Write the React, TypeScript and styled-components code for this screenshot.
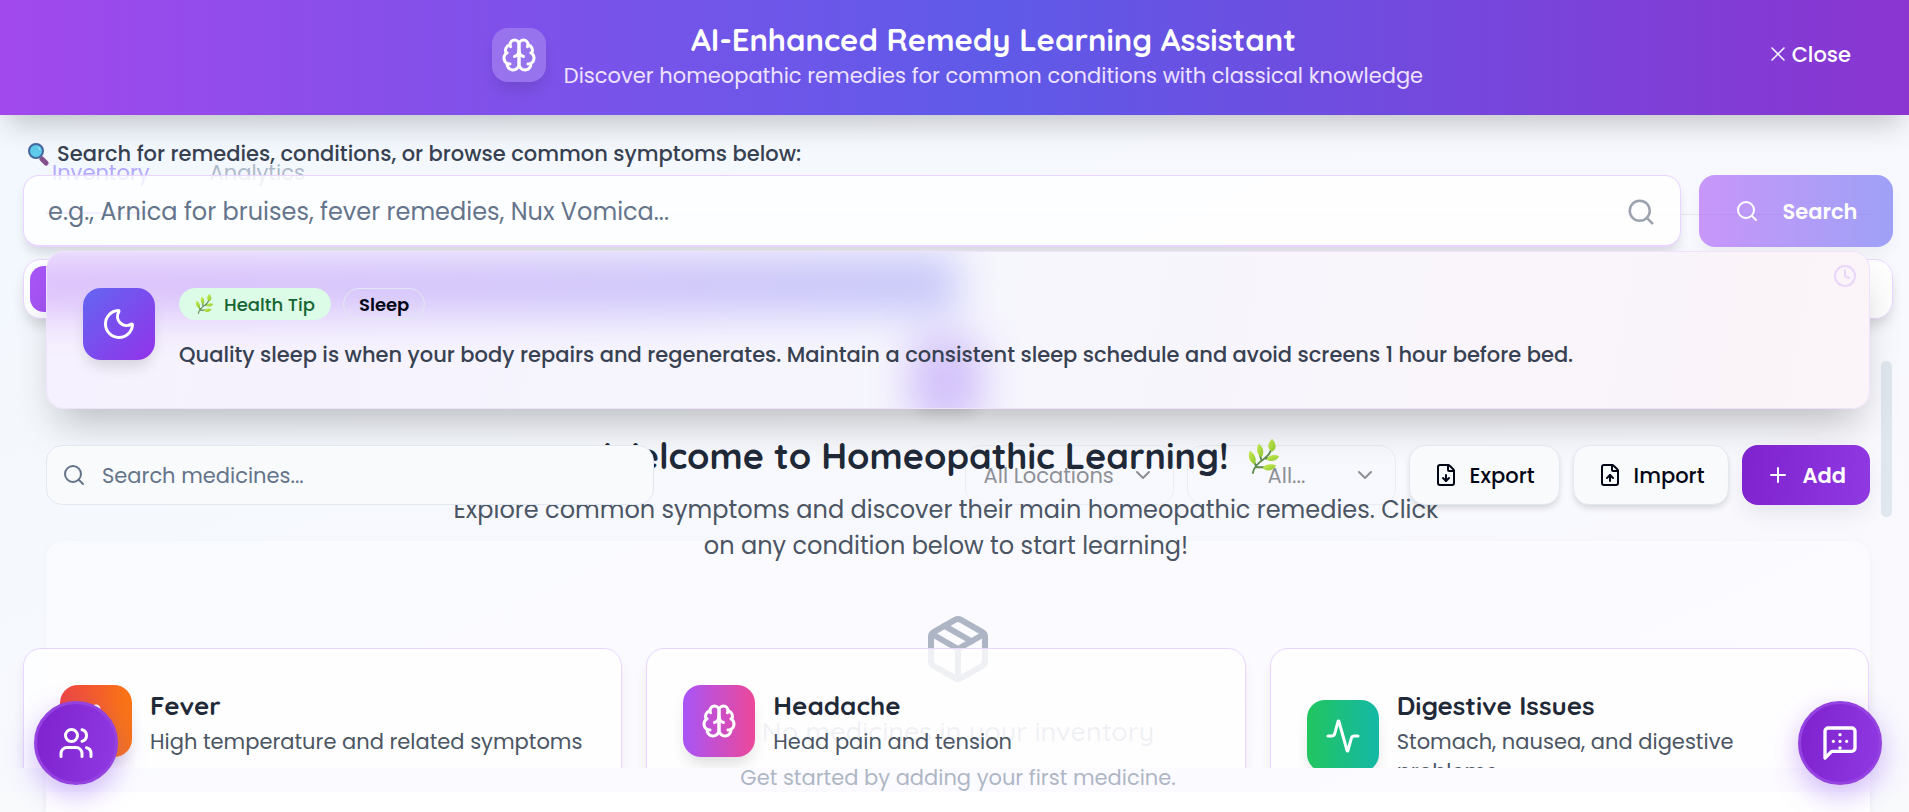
import React from "react";
import styled, { createGlobalStyle } from "styled-components";
import {
  Activity,
  ChevronDown,
  Clock,
  FileDown,
  FileUp,
  MessageSquare,
  Moon,
  Package,
  Plus,
  Search,
  Thermometer,
  Users,
  X,
} from "lucide-react";

const GlobalStyle = createGlobalStyle`
  *, *::before, *::after { box-sizing: border-box; }
  html { background: #f8fafc; }
  body {
    margin: 0;
    color: #1f2937;
    font-family: Poppins, Inter, "Liberation Sans", sans-serif;
    font-size: 21px;
    overflow: hidden;
  }
  h1, h2, h3, p { margin: 0; }
  h1, h2, h3 { font-family: Quicksand, Inter, "Liberation Sans", sans-serif; }
  button, input, select { font: inherit; }
  button { cursor: pointer; border: 0; }
  svg { flex: none; }
`;

const Stack = styled.div`
  position: relative;
  z-index: 0;
  display: grid;
  grid-template-columns: minmax(0, 1fr);
  height: 100vh;
  overflow: hidden;
  background: #f8fafc;
  > * {
    grid-area: 1 / 1;
  }
`;

/* ---------- inventory page ---------- */

const Page = styled.main`
  display: flex;
  flex-direction: column;
  gap: 36px;
  padding: 132px 39px 0 46px;
`;

const Nav = styled.nav`
  display: flex;
  border-bottom: 1px solid #d5dae2;
`;

const NavLink = styled.a<{ $active?: boolean }>`
  display: flex;
  align-items: center;
  height: 82px;
  margin-right: 48px;
  padding: 0 6px;
  color: ${(p) => (p.$active ? "#6d4df5" : "#64748b")};
  text-decoration: none;
  border-bottom: 2px solid ${(p) => (p.$active ? "#8b5cf6" : "transparent")};
`;

const TipCard = styled.section`
  position: relative;
  z-index: 2;
  display: flex;
  gap: 24px;
  padding: 36px 36px 35px;
  overflow: hidden;
  border: 1px solid #efe2fd;
  border-radius: 18px;
  background: linear-gradient(100deg, #f6f1fe, #f6f6fd 50%, #fbf4f9);
  box-shadow: 0 24px 40px -12px rgba(0, 0, 0, 0.25);
  &::before,
  &::after {
    content: "";
    position: absolute;
    filter: blur(20px);
  }
  &::before {
    top: 4px;
    left: -40px;
    width: calc(50% + 40px);
    height: 58px;
    background: linear-gradient(90deg, #a855f7, #6366f1);
    opacity: 0.32;
  }
  &::after {
    top: 84px;
    left: calc(50% - 48px);
    width: 72px;
    height: 90px;
    border-radius: 18px;
    background: #8f5cf5;
    opacity: 0.34;
  }
  > * {
    position: relative;
    z-index: 1;
  }
`;

const Tile = styled.div<{ $fill: string }>`
  display: flex;
  flex: none;
  align-items: center;
  justify-content: center;
  width: 72px;
  height: 72px;
  border-radius: 18px;
  color: #fff;
  background: ${(p) => p.$fill};
  box-shadow: 0 10px 16px -4px rgba(0, 0, 0, 0.14);
`;

const TipBody = styled.div`
  display: flex;
  flex: 1;
  flex-direction: column;
  gap: 17px;
`;

const Badges = styled.div`
  display: flex;
  gap: 12px;
`;

const Badge = styled.span<{ $green?: boolean }>`
  display: flex;
  align-items: center;
  gap: 9px;
  height: 32px;
  padding: 0 15px;
  border: 1px solid ${(p) => (p.$green ? "#dcfce7" : "#e2e8f0")};
  border-radius: 16px;
  background: ${(p) => (p.$green ? "#dcfce7" : "transparent")};
  color: ${(p) => (p.$green ? "#166534" : "#020617")};
  font-size: 18px;
  font-weight: ${(p) => (p.$green ? 500 : 600)};
`;

const TipText = styled.p`
  color: #374151;
  font-weight: 500;
  line-height: 36px;
`;

const ClockCorner = styled.div`
  display: flex;
  align-self: flex-start;
  margin: -24px -24px 0 0;
  color: #ead6fb;
`;

const Toolbar = styled.div`
  display: flex;
  gap: 13px;
`;

const MedicineSearch = styled.label`
  position: relative;
  z-index: 2;
  display: flex;
  align-items: center;
  gap: 14px;
  width: calc(100% / 3);
  height: 60px;
  margin-right: auto;
  padding: 0 15px;
  border: 1px solid #e2e8f0;
  border-radius: 16px;
  background: #f9fafc;
  color: #64748b;
`;

const BareInput = styled.input`
  flex: 1;
  min-width: 0;
  border: 0;
  outline: 0;
  background: transparent;
  color: #1f2937;
  &::placeholder {
    color: #64748b;
    opacity: 1;
  }
`;

const SelectBox = styled.label`
  display: flex;
  align-items: center;
  width: 209px;
  height: 60px;
  padding: 0 18px 0 4px;
  border: 1px solid #dde3ec;
  border-radius: 16px;
  color: #23262d;
`;

const Select = styled.select<{ $indent: number }>`
  flex: 1;
  min-width: 0;
  padding: 0 0 0 ${(p) => p.$indent}px;
  border: 0;
  background: transparent;
  color: inherit;
  appearance: none;
`;

const ToolButton = styled.button<{ $primary?: boolean }>`
  position: relative;
  z-index: 2;
  display: flex;
  align-items: center;
  justify-content: center;
  gap: 12px;
  height: 60px;
  padding: 0 24px;
  border: ${(p) => (p.$primary ? "0" : "1px solid #e2e8f0")};
  border-radius: 16px;
  background: ${(p) => (p.$primary ? "linear-gradient(100deg, #7e22ce, #9039e2)" : "#f9fafc")};
  color: ${(p) => (p.$primary ? "#fff" : "#020617")};
  font-weight: ${(p) => (p.$primary ? 600 : 500)};
  box-shadow: ${(p) =>
    p.$primary ? "0 10px 24px -4px rgba(30, 20, 60, 0.1)" : "0 4px 6px -1px rgba(0, 0, 0, 0.14)"};
`;

const Inventory = styled.section`
  display: flex;
  flex: 1;
  flex-direction: column;
  align-items: center;
  margin-bottom: -24px;
  padding-top: 72px;
  border-radius: 18px;
  background: #fff;
  box-shadow: 0 1px 6px rgba(15, 23, 42, 0.06);
  color: #64748b;
`;

const EmptyTitle = styled.h3`
  margin: 28px 0 15px;
  font-size: 27px;
  font-weight: 500;
  line-height: 36px;
`;

const EmptyText = styled.p`
  line-height: 28px;
`;

/* ---------- learning assistant panel ---------- */

const Panel = styled.section`
  position: relative;
  z-index: 1;
  display: flex;
  flex-direction: column;
  height: calc(100vh - 20px);
  padding-bottom: 24px;
  background: linear-gradient(
    155deg,
    rgba(236, 246, 255, 0.55),
    rgba(246, 247, 255, 0.5) 50%,
    rgba(250, 247, 255, 0.5)
  );
`;

const PanelHeader = styled.header`
  position: relative;
  display: flex;
  flex: none;
  align-items: center;
  justify-content: center;
  gap: 18px;
  height: 115px;
  padding-left: 6px;
  background: linear-gradient(90deg, #a148ec, #5f5ae8 52%, #8a35d1);
  color: #fff;
  box-shadow: 0 16px 28px -8px rgba(0, 0, 0, 0.22);
`;

const HeaderIcon = styled.div`
  display: flex;
  align-items: center;
  justify-content: center;
  width: 54px;
  height: 54px;
  margin-bottom: 5px;
  border-radius: 16px;
  background: rgba(255, 255, 255, 0.2);
  box-shadow: 0 10px 16px -3px rgba(0, 0, 0, 0.12);
`;

const HeaderText = styled.div`
  text-align: center;
`;

const PanelTitle = styled.h1`
  font-size: 31px;
  font-weight: 700;
  line-height: 36px;
`;

const PanelSubtitle = styled.p`
  color: #efe2ff;
  line-height: 36px;
`;

const CloseButton = styled.button`
  position: absolute;
  top: 34px;
  right: 58px;
  display: flex;
  align-items: center;
  gap: 2px;
  height: 40px;
  padding: 0;
  background: transparent;
  color: #fff;
  font-weight: 500;
`;

const SearchForm = styled.form`
  display: grid;
  grid-template-columns: minmax(0, 1fr) 194px;
  column-gap: 18px;
  row-gap: 7px;
  padding: 25px 16px 12px 23px;
`;

const SearchLabel = styled.label`
  display: flex;
  grid-column: 1 / -1;
  align-items: center;
  gap: 8px;
  padding-left: 4px;
  color: #374151;
  font-weight: 500;
  line-height: 28px;
`;

const SearchField = styled.div`
  display: flex;
  align-items: center;
  height: 72px;
  padding: 2px 24px 0 22px;
  border: 1px solid #e9d5ff;
  border-bottom-width: 2px;
  border-radius: 16px;
  background: rgba(255, 255, 255, 0.8);
  color: #9ca3af;
  font-size: 24px;
  box-shadow: 0 8px 12px -3px rgba(0, 0, 0, 0.14);
`;

const SearchButton = styled.button`
  display: flex;
  align-items: center;
  justify-content: center;
  gap: 24px;
  border-radius: 16px;
  background: linear-gradient(90deg, rgba(168, 85, 247, 0.6), rgba(99, 102, 241, 0.6));
  color: #fff;
  font-weight: 600;
  box-shadow: 0 10px 16px -3px rgba(0, 0, 0, 0.05);
`;

const Tabs = styled.div`
  display: grid;
  flex: none;
  grid-template-columns: 1fr 1fr;
  height: 60px;
  margin: 0 16px 0 23px;
  padding: 6px;
  border: 1px solid #e9d5ff;
  border-radius: 18px;
  background: rgba(255, 255, 255, 0.8);
  box-shadow: 0 8px 14px -3px rgba(0, 0, 0, 0.16);
`;

const Tab = styled.button<{ $active?: boolean }>`
  display: flex;
  align-items: center;
  justify-content: center;
  border-radius: 14px;
  background: ${(p) => (p.$active ? "linear-gradient(90deg, #a855f7, #6366f1)" : "transparent")};
  color: #4b5563;
`;

const Learning = styled.div`
  position: relative;
  display: flex;
  flex: 1;
  flex-direction: column;
  align-items: center;
  min-height: 0;
  overflow: hidden;
  padding: 16px 40px 0 23px;
`;

const ScrollThumb = styled.div`
  position: absolute;
  top: 42px;
  right: 17px;
  width: 11px;
  height: 156px;
  border-radius: 6px;
  background: #e0e7ee;
`;

const Welcome = styled.h2`
  display: flex;
  align-items: center;
  gap: 18px;
  margin: 27px 0 14px;
  padding-right: 6px;
  font-size: 36px;
  font-weight: 700;
  line-height: 44px;
`;

const Intro = styled.p`
  max-width: 1008px;
  margin-bottom: 84px;
  color: #4b5563;
  font-size: 24px;
  line-height: 36px;
  text-align: center;
`;

const Conditions = styled.div`
  display: grid;
  grid-template-columns: repeat(3, minmax(0, 1fr));
  gap: 24px;
  align-self: stretch;
`;

const ConditionCard = styled.article`
  min-height: 220px;
  padding: 36px;
  border: 1px solid #e9d5ff;
  border-radius: 18px;
  background: rgba(255, 255, 255, 0.8);
  box-shadow: 0 8px 14px -3px rgba(0, 0, 0, 0.1);
`;

const ConditionHead = styled.header`
  display: flex;
  align-items: center;
  gap: 18px;
`;

const ConditionName = styled.h3`
  font-size: 26px;
  font-weight: 700;
  line-height: 42px;
`;

const ConditionText = styled.p`
  color: #4b5563;
  line-height: 30px;
`;

/* ---------- floating actions ---------- */

const Floating = styled.div`
  position: relative;
  z-index: 3;
  display: flex;
  align-items: flex-end;
  justify-content: space-between;
  padding: 0 27px 27px 34px;
  pointer-events: none;
`;

const RoundButton = styled.button`
  display: flex;
  align-items: center;
  justify-content: center;
  width: 84px;
  height: 84px;
  border: 3px solid #9443e0;
  border-radius: 50%;
  background: linear-gradient(100deg, #7e22ce, #9039e2);
  color: #fff;
  pointer-events: auto;
  box-shadow: 0 10px 28px rgba(124, 58, 237, 0.35);
`;

/* ---------- drawings ---------- */

const BrainIcon = () => (
  <svg
    width="36"
    height="36"
    viewBox="0 0 24 24"
    fill="none"
    stroke="currentColor"
    strokeWidth="2"
    strokeLinecap="round"
    strokeLinejoin="round"
    aria-hidden="true"
  >
    <path d="M12 5a3 3 0 1 0-5.997.125 4 4 0 0 0-2.526 5.77 4 4 0 0 0 .556 6.588A4 4 0 1 0 12 18Z" />
    <path d="M12 5a3 3 0 1 1 5.997.125 4 4 0 0 1 2.526 5.77 4 4 0 0 1-.556 6.588A4 4 0 1 1 12 18Z" />
    <path d="M15 13a4.5 4.5 0 0 1-3-4 4.5 4.5 0 0 1-3 4" />
    <path d="M17.599 6.5a3 3 0 0 0 .399-1.375M6.003 5.125A3 3 0 0 0 6.401 6.5" />
    <path d="M3.477 10.896a4 4 0 0 1 .585-.396M19.938 10.5a4 4 0 0 1 .585.396" />
    <path d="M6 18a4 4 0 0 1-1.967-.516M19.967 17.484A4 4 0 0 1 18 18" />
  </svg>
);

const ChatIcon = () => (
  <svg
    width="40"
    height="40"
    viewBox="0 0 24 24"
    fill="none"
    stroke="currentColor"
    strokeWidth="2"
    strokeLinecap="round"
    strokeLinejoin="round"
    aria-hidden="true"
  >
    <path d="M21 15a2 2 0 0 1-2 2H7l-4 4V5a2 2 0 0 1 2-2h14a2 2 0 0 1 2 2z" />
    <path d="M12 7h.01M8 11h.01M12 11h.01M16 11h.01M12 15h.01" />
  </svg>
);

const Sprig = ({ size }: { size: number }) => (
  <svg width={size} height={size} viewBox="0 0 36 36" role="img" aria-label="Herb">
    <defs>
      <linearGradient id="leaf" x1="0" y1="0" x2="1" y2="1">
        <stop offset="0" stopColor="#cdee55" />
        <stop offset="1" stopColor="#8cc92f" />
      </linearGradient>
    </defs>
    <path
      d="M6 35C7 28 12 24 18 20C22 17 25 14 25 9M9 27Q7 23 5 20M15 22Q13 17 13 14M18 20L23 20M10 29H19"
      fill="none"
      stroke="#5d8a4e"
      strokeWidth="2"
      strokeLinecap="round"
    />
    <g fill="url(#leaf)">
      <path d="M26 13C20 10 21 4 26 0C30 5 31 10 26 13Z" />
      <path d="M15 19C10 16 9 10 12 5C17 8 18 15 15 19Z" />
      <path d="M8 26C3 24 0 18 3 12C9 16 10 21 8 26Z" />
      <path d="M20 21C22 17 28 15 33 18C30 23 24 24 20 21Z" />
      <path d="M16 30C18 26 24 25 30 27C27 33 21 34 16 30Z" />
    </g>
  </svg>
);

const Magnifier = () => (
  <svg width="22" height="26" viewBox="0 0 22 26" role="img" aria-label="Search">
    <path d="M15 18L19 22" stroke="#84508c" strokeWidth="5" strokeLinecap="round" />
    <circle cx="9" cy="10" r="7" fill="#5cccea" stroke="#45679f" strokeWidth="2" />
    <path d="M11 6Q13 7 13 9" fill="none" stroke="#c3f1fc" strokeWidth="1" />
  </svg>
);

const conditions = [
  {
    name: "Fever",
    text: "High temperature and related symptoms",
    fill: "linear-gradient(100deg, #ef4444, #f97316 80%)",
    icon: <Thermometer size={36} />,
  },
  {
    name: "Headache",
    text: "Head pain and tension",
    fill: "linear-gradient(90deg, #a855f7, #ec4899)",
    icon: <BrainIcon />,
  },
  {
    name: "Digestive Issues",
    text: "Stomach, nausea, and digestive problems",
    fill: "linear-gradient(90deg, #22c55e, #14b8a6)",
    icon: <Activity size={36} />,
  },
];

export default function App() {
  return (
    <>
      <GlobalStyle />
      <Stack>
        <Page>
          <Nav>
            <NavLink href="#inventory" $active>
              Inventory
            </NavLink>
            <NavLink href="#analytics">Analytics</NavLink>
          </Nav>

          <TipCard>
            <Tile $fill="linear-gradient(135deg, #6366f1, #9333ea)">
              <Moon size={36} />
            </Tile>
            <TipBody>
              <Badges>
                <Badge $green>
                  <Sprig size={20} />
                  Health Tip
                </Badge>
                <Badge>Sleep</Badge>
              </Badges>
              <TipText>
                Quality sleep is when your body repairs and regenerates. Maintain a consistent sleep
                schedule and avoid screens 1 hour before bed.
              </TipText>
            </TipBody>
            <ClockCorner>
              <Clock size={24} />
            </ClockCorner>
          </TipCard>

          <Toolbar>
            <MedicineSearch>
              <Search size={24} />
              <BareInput type="search" placeholder="Search medicines..." />
            </MedicineSearch>
            <SelectBox>
              <Select $indent={14} aria-label="Location">
                <option>All Locations</option>
              </Select>
              <ChevronDown size={24} />
            </SelectBox>
            <SelectBox>
              <Select $indent={76} aria-label="Category">
                <option>All...</option>
              </Select>
              <ChevronDown size={24} />
            </SelectBox>
            <ToolButton type="button">
              <FileDown size={24} />
              Export
            </ToolButton>
            <ToolButton type="button">
              <FileUp size={24} />
              Import
            </ToolButton>
            <ToolButton type="button" $primary>
              <Plus size={24} />
              Add
            </ToolButton>
          </Toolbar>

          <Inventory>
            <Package size={72} />
            <EmptyTitle>No medicines in your inventory</EmptyTitle>
            <EmptyText>Get started by adding your first medicine.</EmptyText>
          </Inventory>
        </Page>

        <Panel aria-label="Remedy learning">
          <PanelHeader>
            <HeaderIcon>
              <BrainIcon />
            </HeaderIcon>
            <HeaderText>
              <PanelTitle>AI-Enhanced Remedy Learning Assistant</PanelTitle>
              <PanelSubtitle>
                Discover homeopathic remedies for common conditions with classical knowledge
              </PanelSubtitle>
            </HeaderText>
            <CloseButton type="button">
              <X size={24} strokeWidth={1.5} />
              Close
            </CloseButton>
          </PanelHeader>

          <SearchForm>
            <SearchLabel htmlFor="remedy-search">
              <Magnifier />
              Search for remedies, conditions, or browse common symptoms below:
            </SearchLabel>
            <SearchField>
              <BareInput
                id="remedy-search"
                placeholder="e.g., Arnica for bruises, fever remedies, Nux Vomica..."
              />
              <Search size={30} />
            </SearchField>
            <SearchButton type="button">
              <Search size={24} />
              Search
            </SearchButton>
          </SearchForm>

          <Tabs role="tablist">
            <Tab type="button" role="tab" aria-label="Conditions" aria-selected $active />
            <Tab type="button" role="tab" aria-label="Assistant" aria-selected={false}>
              <MessageSquare size={24} />
            </Tab>
          </Tabs>

          <Learning>
            <ScrollThumb />
            <Tile $fill="linear-gradient(135deg, #a855f7, #7c5cf3)">
              <BrainIcon />
            </Tile>
            <Welcome>
              Welcome to Homeopathic Learning!
              <Sprig size={35} />
            </Welcome>
            <Intro>
              Explore common symptoms and discover their main homeopathic remedies. Click on any
              condition below to start learning!
            </Intro>
            <Conditions>
              {conditions.map((c) => (
                <ConditionCard key={c.name}>
                  <ConditionHead>
                    <Tile $fill={c.fill}>{c.icon}</Tile>
                    <div>
                      <ConditionName>{c.name}</ConditionName>
                      <ConditionText>{c.text}</ConditionText>
                    </div>
                  </ConditionHead>
                </ConditionCard>
              ))}
            </Conditions>
          </Learning>
        </Panel>

        <Floating>
          <RoundButton type="button" aria-label="Community">
            <Users size={36} />
          </RoundButton>
          <RoundButton type="button" aria-label="Chat">
            <ChatIcon />
          </RoundButton>
        </Floating>
      </Stack>
    </>
  );
}
